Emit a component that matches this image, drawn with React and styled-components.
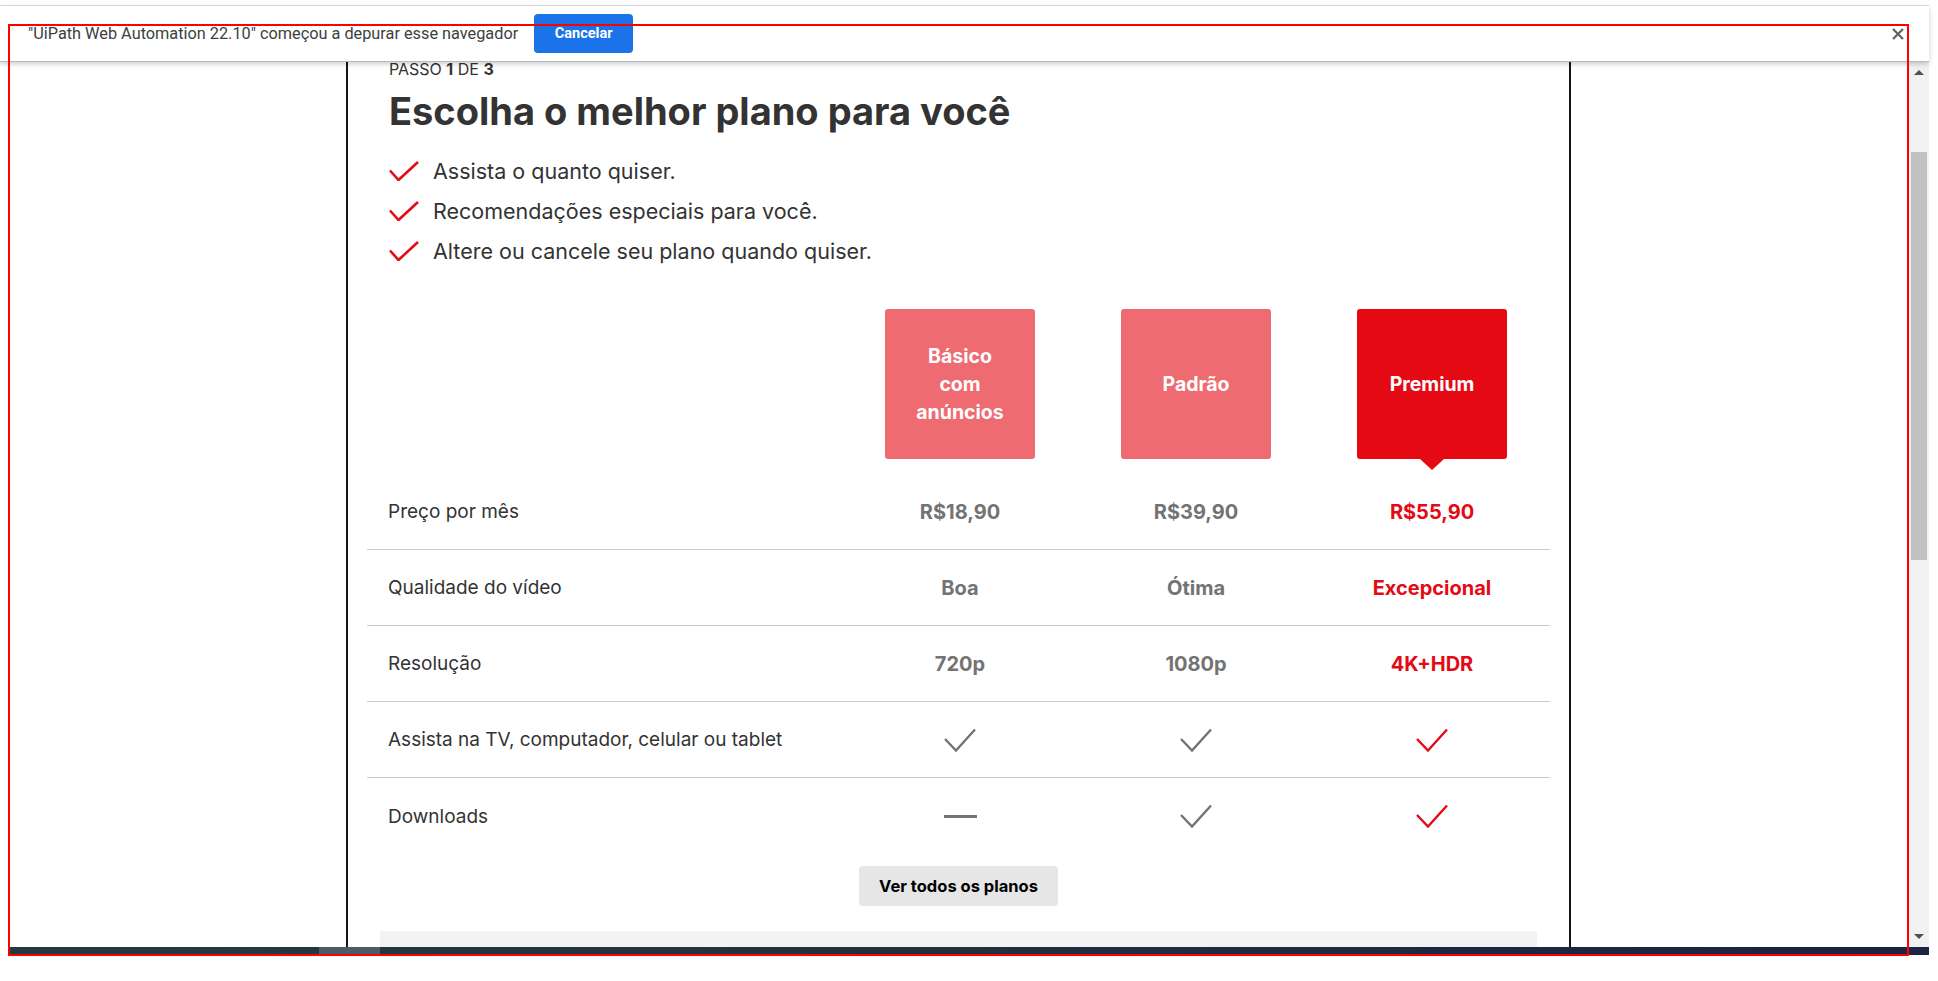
import React from 'react';
import styled, { createGlobalStyle } from 'styled-components';

const GlobalStyle = createGlobalStyle`
  html, body { margin: 0; padding: 0; background: #fff; }
  body { font-family: Roboto, "Liberation Sans", Arial, sans-serif; }
  * { box-sizing: border-box; }
`;

const RED = '#e50914';
const GRAY = '#737373';
const PAGE_FONT = 'Inter, Roboto, "Liberation Sans", Arial, sans-serif';

const Screen = styled.div`
  position: relative;
  width: 1938px;
  height: 981px;
  overflow: hidden;
  background: #fff;
`;

const Window = styled.div`
  width: 1929px;
  padding-top: 5px;
  display: flex;
  flex-direction: column;
`;

const TopRule = styled.div`
  height: 1px;
  background: #dadce0;
`;

const InfoBar = styled.div`
  position: relative;
  z-index: 2;
  height: 56px;
  display: flex;
  align-items: center;
  padding: 0 24px 0 28px;
  background: #fff;
  border-bottom: 1px solid #b9b9b9;
  box-shadow: 0 2px 5px rgba(0, 0, 0, 0.2);
`;

const InfoText = styled.span`
  font-family: Roboto, "Liberation Sans", sans-serif;
  font-size: 16.3px;
  color: #3c4043;
  white-space: nowrap;
`;

const CancelButton = styled.button`
  margin-left: 16px;
  width: 99px;
  height: 39px;
  border: none;
  border-radius: 4px;
  background: #1a73e8;
  color: #fff;
  font-family: Roboto, "Liberation Sans", sans-serif;
  font-size: 14.5px;
  font-weight: 700;
  cursor: pointer;
`;

const CloseButton = styled.button`
  margin-left: auto;
  width: 14px;
  height: 14px;
  padding: 0;
  border: none;
  background: transparent;
  display: flex;
  align-items: center;
  justify-content: center;
`;

const BrowserBody = styled.div`
  display: flex;
  height: 885px;
`;

const Viewport = styled.div`
  flex: 1;
  overflow: hidden;
  position: relative;
  background: #fff;
`;

const VScroll = styled.div`
  width: 20px;
  background: #f1f1f1;
  display: flex;
  flex-direction: column;
`;

const ScrollArrow = styled.div`
  height: 21px;
  display: flex;
  align-items: center;
  justify-content: center;
  &::before {
    content: '';
    width: 0;
    height: 0;
    border-left: 5px solid transparent;
    border-right: 5px solid transparent;
    ${(p) => (p.$down ? 'border-top: 5px solid #505050;' : 'border-bottom: 5px solid #505050;')}
  }
`;

const ThumbTrack = styled.div`
  flex: 1;
  padding: 69px 2px 0;
`;

const Thumb = styled.div`
  height: 408px;
  background: #c1c1c1;
`;

const HScroll = styled.div`
  margin-left: 10px;
  width: 1919px;
  height: 8px;
  display: flex;
  background: linear-gradient(90deg, #243a42 0%, #20323f 45%, #1c2841 75%, #1b2440 100%);
`;

const HThumb = styled.div`
  margin-left: 309px;
  width: 61px;
  background: #4b5e66;
`;

const Highlight = styled.div`
  position: absolute;
  left: 8px;
  top: 24px;
  width: 1901px;
  height: 932px;
  border: 2px solid #ff0000;
  pointer-events: none;
  z-index: 5;
`;

/* ---------- page content ---------- */

const Panel = styled.div`
  margin: -3px 0 0 346px;
  width: 1225px;
  min-height: 920px;
  border-left: 2px solid #141414;
  border-right: 2px solid #141414;
  color: #333;
  font-family: ${PAGE_FONT};
`;

const Header = styled.div`
  padding: 0 41px;
`;

const Step = styled.div`
  font-size: 16px;
  line-height: 20px;
  text-transform: uppercase;
  color: #333;
  b { font-weight: 700; }
`;

const Title = styled.h1`
  margin: 8px 0 0;
  font-size: 38px;
  line-height: 48px;
  font-weight: 700;
  color: #333;
`;

const Checklist = styled.ul`
  list-style: none;
  margin: 16px 0 0;
  padding: 0;
`;

const CheckItem = styled.li`
  height: 40px;
  display: flex;
  align-items: center;
  gap: 14px;
  font-size: 21.5px;
  color: #333;
`;

const Table = styled.div`
  margin: 38px 19px 0;
`;

const GridRow = styled.div`
  display: grid;
  grid-template-columns: 475px repeat(3, 236px);
  align-items: center;
`;

const PlansRow = styled(GridRow)`
  height: 150px;
  margin-bottom: 15px;
`;

const PlanBox = styled.div`
  position: relative;
  justify-self: center;
  width: 150px;
  height: 150px;
  border-radius: 3px;
  background: ${(p) => (p.$selected ? RED : '#ef6b72')};
  color: #fff;
  font-weight: 700;
  font-size: 19.5px;
  line-height: 28px;
  text-align: center;
  display: flex;
  align-items: center;
  justify-content: center;
  ${(p) =>
    p.$selected &&
    `&::after {
      content: '';
      position: absolute;
      left: 50%;
      bottom: -11px;
      transform: translateX(-50%);
      border-left: 12px solid transparent;
      border-right: 12px solid transparent;
      border-top: 11px solid ${RED};
    }`}
`;

const FeatureRow = styled(GridRow)`
  height: 76px;
  border-bottom: ${(p) => (p.$last ? 'none' : '1px solid #cccccc')};
`;

const Label = styled.div`
  padding-left: 21px;
  font-size: 19px;
  color: #333;
`;

const Value = styled.div`
  text-align: center;
  font-size: 20px;
  font-weight: 700;
  color: ${(p) => (p.$selected ? RED : GRAY)};
  display: flex;
  justify-content: center;
  align-items: center;
`;

const Dash = styled.span`
  width: 33px;
  height: 3px;
  background: ${GRAY};
`;

const AllPlansButton = styled.button`
  display: block;
  margin: 12px auto 0;
  width: 199px;
  height: 40px;
  border: none;
  border-radius: 4px;
  background: #e6e6e6;
  color: #000;
  font-family: ${PAGE_FONT};
  font-size: 16.5px;
  font-weight: 700;
  cursor: pointer;
`;

const Disclaimer = styled.div`
  margin: 25px 13px 0;
  padding: 14px 120px 20px;
  background: #f3f3f3;
  font-size: 16px;
  line-height: 22px;
  color: #737373;
  text-align: center;
`;

const ListCheck = () => (
  <svg width="30" height="20" viewBox="0 0 30 20" fill="none">
    <path d="M1 9.5 L9.5 19 L29 1" stroke={RED} strokeWidth="2.6" />
  </svg>
);

const TableCheck = ({ color }) => (
  <svg width="32" height="24" viewBox="0 0 32 24" fill="none">
    <path d="M1 11 L12 22.5 L31 1.5" stroke={color} strokeWidth="2.4" />
  </svg>
);

const CloseIcon = () => (
  <svg width="12" height="12" viewBox="0 0 12 12">
    <path d="M1 1 L11 11 M11 1 L1 11" stroke="#5f6368" strokeWidth="2.2" />
  </svg>
);

const plans = [
  { name: ['Básico', 'com', 'anúncios'] },
  { name: ['Padrão'] },
  { name: ['Premium'], selected: true },
];

const features = [
  { label: 'Preço por mês', values: ['R$18,90', 'R$39,90', 'R$55,90'] },
  { label: 'Qualidade do vídeo', values: ['Boa', 'Ótima', 'Excepcional'] },
  { label: 'Resolução', values: ['720p', '1080p', '4K+HDR'] },
  { label: 'Assista na TV, computador, celular ou tablet', values: ['check', 'check', 'check'] },
  { label: 'Downloads', values: ['dash', 'check', 'check'] },
];

const renderValue = (v, selected) => {
  if (v === 'check') return <TableCheck color={selected ? RED : GRAY} />;
  if (v === 'dash') return <Dash />;
  return v;
};

export default function App() {
  return (
    <>
      <GlobalStyle />
      <Screen>
        <Window>
          <TopRule />
          <InfoBar>
            <InfoText>"UiPath Web Automation 22.10" começou a depurar esse navegador</InfoText>
            <CancelButton>Cancelar</CancelButton>
            <CloseButton aria-label="Fechar">
              <CloseIcon />
            </CloseButton>
          </InfoBar>
          <BrowserBody>
            <Viewport>
              <Panel>
                <Header>
                  <Step>
                    Passo <b>1</b> de <b>3</b>
                  </Step>
                  <Title>Escolha o melhor plano para você</Title>
                  <Checklist>
                    <CheckItem>
                      <ListCheck />
                      Assista o quanto quiser.
                    </CheckItem>
                    <CheckItem>
                      <ListCheck />
                      Recomendações especiais para você.
                    </CheckItem>
                    <CheckItem>
                      <ListCheck />
                      Altere ou cancele seu plano quando quiser.
                    </CheckItem>
                  </Checklist>
                </Header>
                <Table>
                  <PlansRow>
                    <div />
                    {plans.map((p) => (
                      <PlanBox key={p.name.join(' ')} $selected={p.selected}>
                        <span>
                          {p.name.map((line, i) => (
                            <React.Fragment key={line}>
                              {i > 0 && <br />}
                              {line}
                            </React.Fragment>
                          ))}
                        </span>
                      </PlanBox>
                    ))}
                  </PlansRow>
                  {features.map((f, idx) => (
                    <FeatureRow key={f.label} $last={idx === features.length - 1}>
                      <Label>{f.label}</Label>
                      {f.values.map((v, i) => (
                        <Value key={i} $selected={i === 2}>
                          {renderValue(v, i === 2)}
                        </Value>
                      ))}
                    </FeatureRow>
                  ))}
                  <AllPlansButton>Ver todos os planos</AllPlansButton>
                  <Disclaimer>
                    A disponibilidade do conteúdo em HD (720p), Full HD (1080p), Ultra HD (4K) e HDR depende do seu serviço de internet e do dispositivo em uso. Nem todo o conteúdo está disponível em todas as resoluções.
                  </Disclaimer>
                </Table>
              </Panel>
            </Viewport>
            <VScroll>
              <ScrollArrow />
              <ThumbTrack>
                <Thumb />
              </ThumbTrack>
              <ScrollArrow $down />
            </VScroll>
          </BrowserBody>
          <HScroll>
            <HThumb />
          </HScroll>
        </Window>
        <Highlight />
      </Screen>
    </>
  );
}
